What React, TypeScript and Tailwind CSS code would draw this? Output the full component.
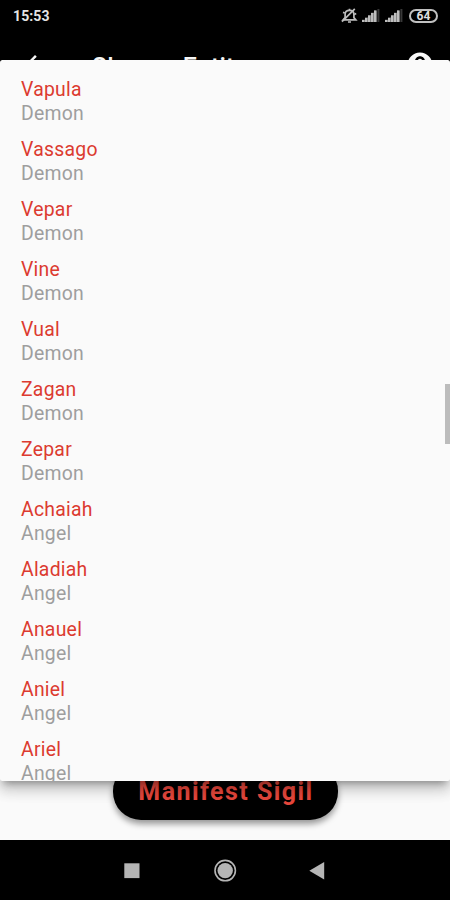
const entities: { name: string; kind: string }[] = [
  { name: 'Vapula', kind: 'Demon' },
  { name: 'Vassago', kind: 'Demon' },
  { name: 'Vepar', kind: 'Demon' },
  { name: 'Vine', kind: 'Demon' },
  { name: 'Vual', kind: 'Demon' },
  { name: 'Zagan', kind: 'Demon' },
  { name: 'Zepar', kind: 'Demon' },
  { name: 'Achaiah', kind: 'Angel' },
  { name: 'Aladiah', kind: 'Angel' },
  { name: 'Anauel', kind: 'Angel' },
  { name: 'Aniel', kind: 'Angel' },
  { name: 'Ariel', kind: 'Angel' },
];

function Signal() {
  return (
    <svg width="18" height="14" viewBox="0 0 18 14" fill="#bdbdbd">
      <path d="M0 13v-2.2h3V8.6h3V6.2h3V3.8h3V1.4h2.6V13z" fill="#777" />
      <rect x="0" y="11" width="2.2" height="2" />
      <rect x="3" y="9" width="2.2" height="4" />
      <rect x="6" y="6.5" width="2.2" height="6.5" />
      <rect x="9" y="4" width="2.2" height="9" />
      <rect x="12" y="1.5" width="2.4" height="11.5" />
      <rect x="15.4" y="0" width="2" height="13" fill="#383838" />
    </svg>
  );
}

function MutedBell() {
  return (
    <svg width="17" height="16" viewBox="0 0 17 16" fill="none" stroke="#bdbdbd" strokeWidth="1.7">
      <path d="M2.2 11.8h12.6l-1.9-2.2V6.5C12.9 4 11 2.4 8.5 2.4S4.1 4 4.1 6.5v3.1z" />
      <path d="M7 14h3M8.5 2.4V.8M2 4.4 3.8 5M15.2 5.5l-2 1" />
      <path d="M1 13.6 13.8.8" />
    </svg>
  );
}

function StatusBar() {
  return (
    <div className="flex h-[30px] items-center justify-between pt-[2px] pr-[12px] pl-[13px]">
      <span className="text-[14px] font-bold tracking-[0.1px] text-[#e4e4e4]">15:53</span>
      <div className="flex items-center">
        <MutedBell />
        <span className="ml-[4px]"><Signal /></span>
        <span className="ml-[5px]"><Signal /></span>
        <span className="ml-[6px] flex h-[14px] w-[29px] items-center justify-center rounded-full border-2 border-[#c0c0c0] text-[12px] leading-none font-bold text-[#dedede]">
          64
        </span>
      </div>
    </div>
  );
}

function AppBar() {
  return (
    <div className="flex h-[70px] items-center px-[20px]">
      <svg width="30" height="30" viewBox="0 0 24 24" fill="#fff">
        <path d="M20 11H7.83l5.59-5.59L12 4l-8 8 8 8 1.41-1.41L7.83 13H20v-2z" />
      </svg>
      <h1 className="ml-[41px] flex-1 pt-[6px] text-[25px] font-medium tracking-[0.1px] text-white">Choose Entity</h1>
      <svg className="-mr-[5px]" width="30" height="30" viewBox="0 0 24 24" fill="#fff">
        <path d="M12 2C6.48 2 2 6.48 2 12s4.48 10 10 10 10-4.48 10-10S17.52 2 12 2zm1 17h-2v-2h2v2zm2.07-7.75-.9.92C13.45 12.9 13 13.5 13 15h-2v-.5c0-1.1.45-2.1 1.17-2.83l1.24-1.26c.37-.36.59-.86.59-1.41 0-1.1-.9-2-2-2s-2 .9-2 2H8c0-2.21 1.79-4 4-4s4 1.79 4 4c0 .88-.36 1.68-.93 2.25z" />
      </svg>
    </div>
  );
}

function EntityMenu() {
  return (
    <div className="absolute inset-x-0 top-[60px] h-[721px] overflow-hidden rounded-[2.5px] bg-[#fafafa] shadow-[0_6px_7px_-4px_rgba(0,0,0,0.3),0_10px_13px_0px_rgba(0,0,0,0.14),0_4px_18px_2px_rgba(0,0,0,0.1)]">
      <ul className="pt-[18px] pl-[21px] text-[19.4px] leading-[24px] tracking-[0.25px]">
        {entities.map((e) => (
          <li key={e.name} className="h-[60px]">
            <div className="text-[#dc3b30]">{e.name}</div>
            <div className="text-[#9e9e9e]">{e.kind}</div>
          </li>
        ))}
      </ul>
      <div className="absolute top-[324px] right-0 h-[60px] w-[5px] bg-[#bcbcbc]" />
    </div>
  );
}

function NavBar() {
  return (
    <div className="flex h-[60px] items-center bg-black pl-[124px]">
      <svg width="202" height="24" viewBox="0 0 202 24" fill="#b5b5b5">
        <rect x="0.3" y="5.3" width="15.2" height="14.8" />
        <circle cx="101.2" cy="12.6" r="10.2" fill="none" stroke="#b5b5b5" strokeWidth="1.6" />
        <circle cx="101.2" cy="12.6" r="7.7" />
        <path d="M185.3 12.7 200.2 4v17.4z" />
      </svg>
    </div>
  );
}

export default function App() {
  return (
    <div className="relative flex h-[900px] w-[450px] flex-col overflow-hidden bg-[#fafafa] font-['Roboto',sans-serif]">
      <header className="bg-black">
        <StatusBar />
        <AppBar />
      </header>
      <main className="flex flex-1 flex-col items-center justify-end pb-[20px]">
        <button className="h-[57px] w-[225px] rounded-[28px] bg-black pl-[2px] text-[25px] font-bold tracking-[1.45px] whitespace-nowrap text-[#e5473c] shadow-[0_4px_6px_rgba(0,0,0,0.4)]">
          Manifest Sigil
        </button>
      </main>
      <NavBar />
      <EntityMenu />
    </div>
  );
}
